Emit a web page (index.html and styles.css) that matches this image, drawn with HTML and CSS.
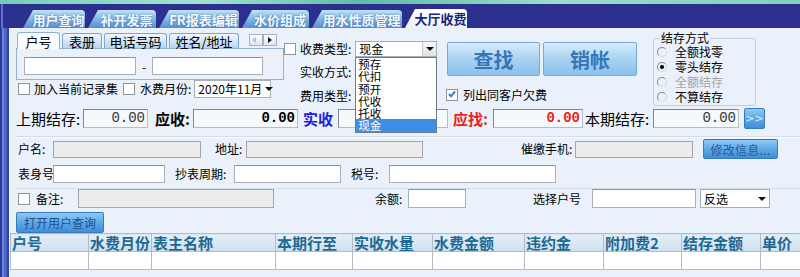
FILE: index.html
```html
<!DOCTYPE html>
<html lang="zh-CN">
<head>
  <meta charset="UTF-8">
  <meta name="viewport" content="width=device-width, initial-scale=1.0">
  <title>大厅收费</title>
  <link rel="stylesheet" href="styles.css">
</head>
<body>

  <div class="top-strip"></div>

  <nav class="tabs">
    <span class="tab tab_w62">用户查询</span>
    <span class="tab tab_w68">补开发票</span>
    <span class="tab tab_w80">FR报表编辑</span>
    <span class="tab tab_w67">水价组成</span>
    <span class="tab tab_w90">用水性质管理</span>
    <span class="tab tab_w62 tab_active">大厅收费</span>
  </nav>

  <div class="frame">
    <div class="side"></div>

    <main class="page">

      <div class="block">
        <div class="search">
          <div class="subtabs">
            <span class="subtab subtab_active subtab_w43">户号</span>
            <span class="subtab subtab_w40">表册</span>
            <span class="subtab subtab_w63">电话号码</span>
            <span class="subtab subtab_w70">姓名/地址</span>
            <span class="arrows"><i class="arrow arrow_left"></i><i class="arrow arrow_right"></i></span>
          </div>
          <div class="subpanel">
            <span class="field field_w112 field_h18"></span>
            <span class="dash">-</span>
            <span class="field field_w111 field_h18"></span>
          </div>
          <div class="line">
            <span class="cb"></span>
            <span class="text text_ml4">加入当前记录集</span>
            <span class="cb cb_ml5"></span>
            <span class="text text_ml5">水费月份:</span>
            <span class="select select_w77 select_h18 select_ml3">2020年11月<i class="select__btn"></i></span>
          </div>
        </div>

        <div class="fees">
          <div class="fees__row">
            <span class="cb"></span>
            <span class="text text_ml4">收费类型:</span>
            <div class="combo">
              <span class="select select_w82 select_h16">现金<i class="select__btn select__btn_boxed"></i></span>
              <ul class="droplist">
                <li>预存</li>
                <li>代扣</li>
                <li>预开</li>
                <li>代收</li>
                <li>托收</li>
                <li class="droplist__sel">现金</li>
              </ul>
            </div>
          </div>
          <div class="fees__row fees__row_label">实收方式:</div>
          <div class="fees__row fees__row_label fees__row_last">费用类型:</div>
        </div>

        <div class="actions">
          <div class="actions__btns">
            <button class="big-btn big-btn_w93">查找</button>
            <button class="big-btn big-btn_w94">销帐</button>
          </div>
          <div class="actions__check">
            <span class="cb cb_checked"></span>
            <span class="text text_ml5">列出同客户欠费</span>
          </div>
        </div>

        <fieldset class="group">
          <legend class="group__title">结存方式</legend>
          <div class="radio"><span class="rb"></span>全额找零</div>
          <div class="radio"><span class="rb rb_on"></span>零头结存</div>
          <div class="radio radio_off"><span class="rb"></span>全额结存</div>
          <div class="radio"><span class="rb"></span>不算结存</div>
        </fieldset>
      </div>

      <div class="balance">
        <span class="big-label big-label_w67">上期结存:</span>
        <span class="num num_w65">0.00</span>
        <span class="big-label big-label_bold big-label_w38 big-label_ml7">应收:</span>
        <span class="num num_w105 num_bold">0.00</span>
        <span class="big-label big-label_bold big-label_blue big-label_w35 big-label_ml5">实收</span>
        <span class="num num_w110"></span>
        <span class="big-label big-label_bold big-label_red big-label_w40 big-label_ml5">应找:</span>
        <span class="num num_w90 num_bold num_red">0.00</span>
        <span class="big-label big-label_w68 big-label_ml2">本期结存:</span>
        <span class="num num_w86">0.00</span>
        <button class="blue-btn blue-btn_more">&gt;&gt;</button>
      </div>

      <section class="info">
        <div class="info__row info__row_first">
          <span class="text text_w35">户名:</span>
          <span class="field field_gray field_w148 field_h17"></span>
          <span class="text text_w31 text_ml14">地址:</span>
          <span class="field field_gray field_w177 field_h17"></span>
          <span class="text text_w54 text_ml98">催缴手机:</span>
          <span class="field field_gray field_w118 field_h17"></span>
          <button class="blue-btn blue-btn_edit">修改信息...</button>
        </div>
        <div class="info__row info__row_second">
          <span class="text text_w35">表身号</span>
          <span class="field field_w112 field_h18"></span>
          <span class="text text_w59 text_ml10">抄表周期:</span>
          <span class="field field_w107 field_h18"></span>
          <span class="text text_w38 text_ml10">税号:</span>
          <span class="field field_w167 field_h18"></span>
        </div>
      </section>

      <section class="note">
        <span class="cb"></span>
        <span class="text text_w42 text_ml6">备注:</span>
        <span class="field field_gray field_w196 field_h19"></span>
        <span class="text text_w33 text_ml101">余额:</span>
        <span class="field field_w58 field_h19"></span>
        <span class="text text_w59 text_ml67">选择户号</span>
        <span class="field field_w104 field_h19"></span>
        <span class="select select_w70 select_h19 select_ml4">反选<i class="select__btn"></i></span>
      </section>

      <div class="open-row">
        <button class="blue-btn blue-btn_open">打开用户查询</button>
      </div>

      <table class="grid">
        <tr class="grid__head">
          <th class="col_78">户号</th>
          <th class="col_63">水费月份</th>
          <th class="col_124">表主名称</th>
          <th class="col_77">本期行至</th>
          <th class="col_80">实收水量</th>
          <th class="col_92">水费金额</th>
          <th class="col_79">违约金</th>
          <th class="col_78">附加费2</th>
          <th class="col_79">结存金额</th>
          <th class="col_60">单价</th>
        </tr>
        <tr class="grid__row">
          <td></td><td></td><td></td><td></td><td></td><td></td><td></td><td></td><td></td><td></td>
        </tr>
      </table>

    </main>
  </div>

</body>
</html>
```

FILE: styles.css
```css
*, *:after, *:before {
  box-sizing: border-box;
}

html, body {
  margin: 0;
  height: 100%;
}

body {
  overflow: hidden;
  background-color: #eaf1fa;
  color: #000;
  font-family: "Noto Sans CJK SC", "DejaVu Sans", sans-serif;
  font-size: 12px;
  line-height: 1;
}

button {
  font-family: inherit;
  cursor: pointer;
}

/* top decoration and main tabs */

.top-strip {
  height: 4px;
  background: linear-gradient(90deg, #76cdb8, #a4e2d3 25%, #5fbca7 45%, #9edccb 70%, #7fd0bd);
}

.tabs {
  display: flex;
  align-items: flex-end;
  gap: 3px;
  height: 24px;
  padding-left: 23px;
  background: linear-gradient(90deg, #2c2f8e 0 1px, #5b6fd0 1px 3px, #2c2f8e 3px);
}

.tab {
  display: flex;
  align-items: center;
  justify-content: center;
  height: 18px;
  padding-left: 9px;
  color: #f4f9ff;
  font-size: 13px;
  font-weight: bold;
  background: linear-gradient(#c2e4f8, #86bbe6 45%, #5590cf);
  clip-path: polygon(10px 0, 100% 0, 100% 100%, 0 100%);
  border-top-right-radius: 4px;
  text-shadow: 0 0 2px #3a6aa8;
}

.tab_active {
  height: 19px;
  color: #1b2379;
  background: linear-gradient(#ffffff, #eaf3fc);
  text-shadow: none;
}

.tab_w62 { width: 62px; }
.tab_w67 { width: 67px; }
.tab_w68 { width: 68px; }
.tab_w80 { width: 80px; }
.tab_w90 { width: 90px; }

/* frame */

.frame {
  display: flex;
  height: 249px;
}

.side {
  flex: none;
  width: 9px;
  background: linear-gradient(90deg, #2a3899 0 2px, #6b86da 2px 4px, #4a63c4 4px 7px, #2f44a8 7px);
}

.page {
  flex: 1;
  min-width: 0;
  padding-left: 7px;
}

/* generic bits */

.text {
  flex: none;
  white-space: nowrap;
}

.text_ml4 { margin-left: 4px; }
.text_ml5 { margin-left: 5px; }
.text_ml6 { margin-left: 6px; }
.text_ml10 { margin-left: 10px; }
.text_ml14 { margin-left: 14px; }
.text_ml67 { margin-left: 67px; }
.text_ml98 { margin-left: 98px; }
.text_ml101 { margin-left: 101px; }
.text_w31 { width: 31px; }
.text_w33 { width: 33px; }
.text_w35 { width: 35px; }
.text_w38 { width: 38px; }
.text_w42 { width: 42px; }
.text_w54 { width: 54px; }
.text_w59 { width: 59px; }

.cb {
  flex: none;
  position: relative;
  width: 12px;
  height: 12px;
  background-color: #fff;
  border: 1px solid #8e9398;
}

.cb_ml5 { margin-left: 5px; }

.cb_checked:after {
  content: "";
  position: absolute;
  left: 3px;
  top: 0;
  width: 4px;
  height: 7px;
  border: solid #3a7fcf;
  border-width: 0 2px 2px 0;
  transform: rotate(40deg);
}

.field {
  flex: none;
  display: block;
  background-color: #fff;
  border: 1px solid #a9b0b8;
  border-top-color: #8a939d;
}

.field_gray {
  background-color: #ececec;
  border-color: #a6a6a6;
}

.field_h17 { height: 17px; }
.field_h18 { height: 18px; }
.field_h19 { height: 19px; }
.field_w58 { width: 58px; }
.field_w104 { width: 104px; }
.field_w107 { width: 107px; }
.field_w111 { width: 111px; }
.field_w112 { width: 112px; }
.field_w118 { width: 118px; }
.field_w148 { width: 148px; }
.field_w167 { width: 167px; }
.field_w177 { width: 177px; }
.field_w196 { width: 196px; }

.select {
  flex: none;
  position: relative;
  display: flex;
  align-items: center;
  padding-left: 3px;
  background-color: #fff;
  border: 1px solid #a5adb6;
  white-space: nowrap;
}

.select_h16 { height: 16px; }
.select_h18 { height: 18px; }
.select_h19 { height: 19px; }
.select_w70 { width: 70px; }
.select_w77 { width: 77px; }
.select_w82 { width: 82px; }
.select_ml3 { margin-left: 3px; }
.select_ml4 { margin-left: 4px; }

.select__btn {
  margin-left: auto;
  width: 14px;
  height: 100%;
  background: #fff;
  position: relative;
}

.select__btn_boxed {
  background: linear-gradient(#f7f7f7, #e2e2e2);
  border-left: 1px solid #c8c8c8;
}

.select__btn:after {
  content: "";
  position: absolute;
  left: 3px;
  top: 50%;
  margin-top: -2px;
  border: 4px solid transparent;
  border-top: 4px solid #111;
  border-bottom: 0;
}

/* top block */

.block {
  display: flex;
  align-items: flex-start;
  height: 79px;
}

.search {
  flex: none;
  width: 268px;
  margin-top: 4px;
}

.subtabs {
  display: flex;
  align-items: flex-end;
  gap: 2px;
  height: 16px;
  padding-left: 1px;
}

.subtab {
  display: flex;
  align-items: center;
  justify-content: center;
  height: 15px;
  font-size: 13px;
  background: linear-gradient(#f0f7fd, #b7d6f1);
  border: 1px solid #7fa6cc;
  border-bottom: none;
  border-radius: 3px 3px 0 0;
}

.subtab_active {
  height: 17px;
  margin-bottom: -1px;
  background: #fafdff;
  border-color: #8fb0d2;
  position: relative;
}

.subtab_w40 { width: 40px; }
.subtab_w43 { width: 43px; }
.subtab_w63 { width: 63px; }
.subtab_w70 { width: 70px; }

.arrows {
  display: flex;
  margin-left: 8px;
  margin-bottom: 2px;
}

.arrow {
  position: relative;
  width: 14px;
  height: 12px;
  background: linear-gradient(#fdfdfd, #dde6ef);
  border: 1px solid #9fb3c8;
}

.arrow:after {
  content: "";
  position: absolute;
  top: 2px;
  border: 3px solid transparent;
}

.arrow_left:after {
  left: 2px;
  border-right: 4px solid #b9c4cf;
  border-left: 0;
}

.arrow_right:after {
  left: 4px;
  border-left: 4px solid #111;
  border-right: 0;
}

.subpanel {
  display: flex;
  align-items: flex-start;
  height: 32px;
  padding: 8px 0 0 7px;
  border: 1px solid #93b2d1;
}

.dash {
  width: 16px;
  padding-top: 4px;
  text-align: center;
}

.line {
  display: flex;
  align-items: center;
  height: 18px;
  padding-left: 2px;
}

.fees {
  flex: none;
  width: 156px;
  margin-top: 13px;
}

.fees__row {
  display: flex;
  align-items: center;
  height: 16px;
}

.fees__row_label {
  margin-top: 7px;
  padding-left: 16px;
}

.fees__row_last {
  margin-top: 8px;
}

.combo {
  position: relative;
  margin-left: 4px;
}

.droplist {
  position: absolute;
  z-index: 2;
  left: 0;
  top: 16px;
  width: 82px;
  margin: 0;
  padding: 0 0 0 2px;
  list-style: none;
  background-color: #fff;
  border: 1px solid #6e7b88;
}

.droplist li {
  height: 12.3px;
  font-size: 11.5px;
  line-height: 12px;
}

.droplist__sel {
  margin-left: -2px;
  padding-left: 2px;
  color: #fff;
  background-color: #3d8ee6;
}

.actions {
  flex: none;
  width: 191px;
  margin: 14px 0 0 7px;
}

.actions__btns {
  display: flex;
  gap: 3px;
}

.big-btn {
  height: 34px;
  padding: 0;
  color: #3576bb;
  font-size: 20px;
  font-weight: bold;
  background: linear-gradient(#d7edfb, #a9d2f2 50%, #8cc0ea);
  border: 1px solid #7aa8d2;
  border-radius: 2px;
}

.big-btn_w93 { width: 93px; }
.big-btn_w94 { width: 94px; }

.actions__check {
  display: flex;
  align-items: center;
  margin: 13px 0 0 -1px;
}

.group {
  flex: none;
  width: 103px;
  height: 74px;
  margin: 4px 0 0 15px;
  padding: 0 0 0 3px;
  border: 1px solid #c6ccd4;
  border-radius: 3px;
}

.group__title {
  margin-left: 3px;
  padding: 0 1px;
  line-height: 12px;
}

.radio {
  display: flex;
  align-items: center;
  height: 15px;
  white-space: nowrap;
}

.radio_off {
  color: #a4a4a4;
}

.rb {
  position: relative;
  width: 10px;
  height: 10px;
  margin-right: 8px;
  border: 1px solid #8b8b8b;
  border-right-color: #d6d6d6;
  border-bottom-color: #d6d6d6;
  border-radius: 50%;
}

.rb_on:after {
  content: "";
  position: absolute;
  left: 2px;
  top: 2px;
  width: 4px;
  height: 4px;
  border-radius: 50%;
  background-color: #000;
}

/* balance row */

.balance {
  display: flex;
  align-items: center;
  height: 23px;
}

.big-label {
  flex: none;
  font-size: 15px;
  white-space: nowrap;
}

.big-label_bold { font-weight: bold; }
.big-label_blue { color: #1c1ce0; }
.big-label_red { color: #ee1c1c; }
.big-label_ml2 { margin-left: 2px; }
.big-label_ml5 { margin-left: 5px; }
.big-label_ml7 { margin-left: 7px; }
.big-label_w35 { width: 35px; }
.big-label_w38 { width: 38px; }
.big-label_w40 { width: 40px; }
.big-label_w67 { width: 67px; }
.big-label_w68 { width: 68px; }

.num {
  flex: none;
  height: 19px;
  padding-right: 2px;
  font-family: "Liberation Mono", monospace;
  font-size: 14px;
  line-height: 17px;
  text-align: right;
  color: #333;
  background-color: #f6f9fc;
  border: 1px solid #b4bcc4;
  border-top-color: #7d8790;
  border-left-color: #7d8790;
}

.num_bold {
  font-weight: bold;
  color: #000;
}

.num_red { color: #ee1c1c; }
.num_w65 { width: 65px; }
.num_w86 { width: 86px; }
.num_w90 { width: 90px; }
.num_w105 { width: 105px; }
.num_w110 { width: 110px; }

.blue-btn {
  flex: none;
  padding: 0;
  color: #224f8e;
  font-size: 12px;
  background: linear-gradient(#8ec9f3, #59a6e6 55%, #3f8fd7);
  border: 1px solid #3a7bbf;
  border-radius: 2px;
}

.blue-btn_more {
  width: 21px;
  height: 21px;
  margin-left: 5px;
  color: #dcefff;
  font-family: "DejaVu Sans", sans-serif;
  font-size: 11px;
}

.blue-btn_edit {
  width: 75px;
  height: 20px;
  margin-left: 10px;
  color: #2a5b9c;
  letter-spacing: 0.3px;
}

.blue-btn_open {
  width: 88px;
  height: 21px;
}

/* info rows */

.info {
  margin-top: 6px;
  padding-left: 2px;
  border-top: 1px solid #d2dce7;
  box-shadow: inset 0 1px 0 #fbfdff;
}

.info__row {
  display: flex;
  align-items: center;
}

.info__row_first {
  height: 20px;
  margin-top: 2px;
}

.info__row_second {
  height: 18px;
  margin-top: 6px;
}

.note {
  display: flex;
  align-items: center;
  height: 19px;
  margin-top: 5px;
  padding-left: 2px;
  border-top: 1px solid #d2dce7;
  box-sizing: content-box;
}

.open-row {
  height: 21px;
  margin-top: 4px;
}

/* grid */

.grid {
  width: 800px;
  margin-left: -6px;
  border-collapse: collapse;
  table-layout: fixed;
}

.grid th, .grid td {
  padding: 0;
  border: 1px solid #b3bcc5;
  overflow: hidden;
  white-space: nowrap;
}

.grid__head th {
  height: 18px;
  padding-left: 1px;
  color: #1d6994;
  font-size: 15px;
  font-weight: bold;
  text-align: left;
  background: linear-gradient(#e4eef6, #cfe0ed);
}

.grid__row td {
  height: 18px;
  background-color: #fff;
}

.col_60 { width: 60px; }
.col_63 { width: 63px; }
.col_77 { width: 77px; }
.col_78 { width: 78px; }
.col_79 { width: 79px; }
.col_80 { width: 80px; }
.col_92 { width: 92px; }
.col_124 { width: 124px; }
```
